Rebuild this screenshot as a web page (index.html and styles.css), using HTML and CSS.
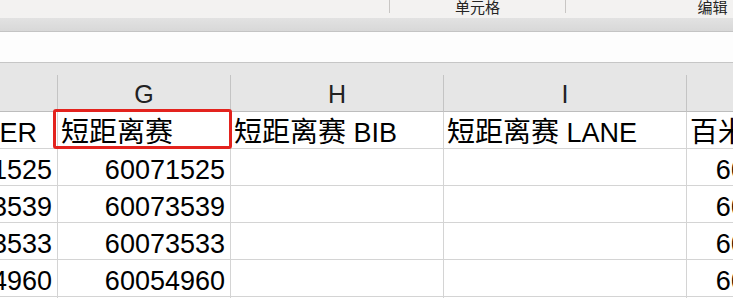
FILE: index.html
```html
<!DOCTYPE html>
<html lang="zh-CN">
	<head>
		<meta charset="UTF-8" />
		<meta name="viewport" content="width=device-width, initial-scale=1.0" />
		<title>Sheet</title>
		<link rel="stylesheet" href="styles.css">
	</head>
	<body>
		<div class="ribbon">
			<div class="group group-wide"></div>
			<div class="group group-cells"><span class="group-label">单元格</span></div>
			<div class="group group-edit"><span class="group-label">编辑</span></div>
		</div>
		<div class="ribbon-foot"></div>
		<div class="formula-bar"></div>

		<div class="sheet">
			<div class="grid">
				<div class="col-head"></div>
				<div class="col-head">G</div>
				<div class="col-head">H</div>
				<div class="col-head">I</div>
				<div class="col-head"></div>

				<div class="cell text clip"><span>BIB NUMBER</span></div>
				<div class="cell text selected"><span><span class="cjk">短距离赛</span></span></div>
				<div class="cell text"><span><span class="cjk">短距离赛</span> BIB</span></div>
				<div class="cell text"><span><span class="cjk">短距离赛</span> LANE</span></div>
				<div class="cell text"><span><span class="cjk">百米</span> BIB</span></div>

				<div class="cell num clip"><span>60071525</span></div>
				<div class="cell num"><span>60071525</span></div>
				<div class="cell"></div>
				<div class="cell"></div>
				<div class="cell num"><span>60071525</span></div>

				<div class="cell num clip"><span>60073539</span></div>
				<div class="cell num"><span>60073539</span></div>
				<div class="cell"></div>
				<div class="cell"></div>
				<div class="cell num"><span>60073539</span></div>

				<div class="cell num clip"><span>60073533</span></div>
				<div class="cell num"><span>60073533</span></div>
				<div class="cell"></div>
				<div class="cell"></div>
				<div class="cell num"><span>60073533</span></div>

				<div class="cell num clip"><span>60054960</span></div>
				<div class="cell num"><span>60054960</span></div>
				<div class="cell"></div>
				<div class="cell"></div>
				<div class="cell num"><span>60054960</span></div>

				<div class="cell"></div>
				<div class="cell"></div>
				<div class="cell"></div>
				<div class="cell"></div>
				<div class="cell"></div>
			</div>
		</div>
	</body>
</html>
```

FILE: styles.css
```css
body {
	margin: 0;
	width: 733px;
	height: 298px;
	overflow: hidden;
	background: #fff;
	font-family: 'Liberation Sans', 'Noto Sans CJK SC', sans-serif;
}

.ribbon {
	display: flex;
	height: 18px;
	background: #f3f2f1;
	overflow: hidden;
}
.group {
	box-sizing: border-box;
	flex: none;
	height: 13px;
	display: flex;
	justify-content: center;
	align-items: flex-end;
	border-right: 1px solid #c8c6c4;
}
.group-wide {
	width: 390px;
}
.group-cells {
	width: 176px;
}
.group-edit {
	width: 294px;
}
.group-label {
	font-family: 'Noto Sans CJK SC', sans-serif;
	font-size: 15px;
	line-height: 15px;
	margin-bottom: -1px;
	color: #252423;
}

.ribbon-foot {
	height: 13px;
	background: linear-gradient(#e2e2e2, #d8d8d8);
	border-bottom: 1px solid #c4c4c4;
}
.formula-bar {
	height: 30px;
	background: #fdfdfd;
	border-bottom: 1px solid #c6c6c6;
}

.sheet {
	background: #e6e6e6;
	padding-top: 12px;
}
.grid {
	display: grid;
	grid-template-columns: 58px 173px 213px 243px 155px;
	grid-auto-rows: 37px;
}

.col-head {
	box-sizing: border-box;
	border-right: 1px solid #c4c4c4;
	border-bottom: 1px solid #bdbdbd;
	padding-top: 2px;
	font-size: 25px;
	line-height: 34px;
	text-align: center;
	color: #222;
}

.cell {
	box-sizing: border-box;
	display: flex;
	align-items: flex-end;
	background: #fff;
	border-right: 1px solid #d4d4d4;
	border-bottom: 1px solid #d4d4d4;
	font-size: 27px;
	line-height: 30px;
	color: #000;
	white-space: nowrap;
}
.cell > span {
	flex: none;
}
.text {
	padding-left: 3px;
}
.num {
	justify-content: flex-end;
	padding-right: 5px;
}
.clip {
	overflow: hidden;
}
.text.clip {
	justify-content: flex-end;
	padding-right: 20px;
}
.cjk {
	font-size: 28px;
	line-height: 0;
}

.selected {
	position: relative;
}
.selected::after {
	content: '';
	position: absolute;
	left: -5px;
	right: -2px;
	top: -3px;
	bottom: -1px;
	border: 3px solid #e3231e;
	border-radius: 3px;
}
```
